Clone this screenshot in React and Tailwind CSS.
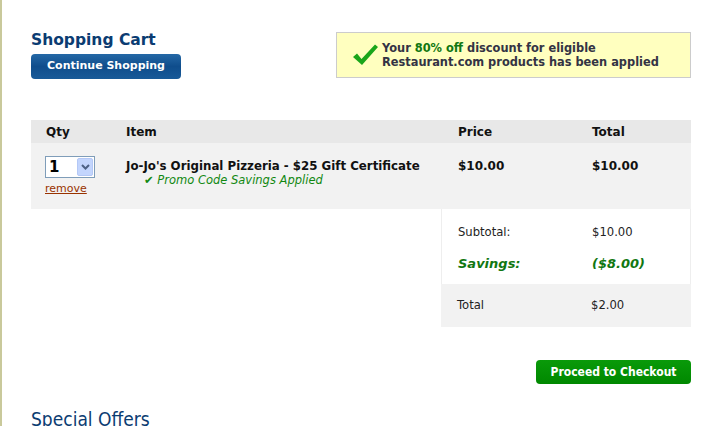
export default function App() {
  const v = { fontFamily: '"DejaVu Sans", Verdana, sans-serif' };
  const c = { fontFamily: '"DejaVu Sans Condensed", "DejaVu Sans", sans-serif' };
  return (
    <div className="w-[711px] h-[426px] overflow-hidden bg-white border-l-2 border-[#c9c99b] relative" style={v}>
      <div className="pl-[29px] pr-[20px] pt-[28px]">
        <div className="flex justify-between">
          <div>
            <h1 className="text-[15.5px] font-bold text-[#0b3c72] leading-[22px] pt-[1px]">Shopping Cart</h1>
            <button className="mt-[3px] w-[150px] h-[25px] rounded-[4px] text-white text-[11px] font-bold bg-gradient-to-b from-[#2468a6] via-[#0f4d8c] to-[#185a98]">
              Continue Shopping
            </button>
          </div>
          <div className="mt-[4px] w-[355px] h-[46px] bg-[#ffffbf] border border-[#cccccc] flex items-center pl-[14px]">
            <svg width="28" height="24" viewBox="0 0 28 24" className="mr-[3px]">
              <path d="M2 14 L6 10.5 L10.5 16 L24 1.5 L27 4 L11 22 Z" fill="#1aa61a" />
            </svg>
            <div className="text-[11.4px] font-bold text-[#333344] leading-[14px]">
              Your <span className="text-[#117711]">80% off</span> discount for eligible
              <br />
              Restaurant.com products has been applied
            </div>
          </div>
        </div>

        <div className="mt-[41px] w-[660px]">
          <div className="grid grid-cols-[80px_330px_135px_115px] h-[23px] items-center bg-[#e8e8e8] text-[12px] font-bold text-[#111]">
            <div className="pl-[15px]">Qty</div>
            <div className="pl-[15px]">Item</div>
            <div className="pl-[17px]">Price</div>
            <div className="pl-[16px]">Total</div>
          </div>
          <div className="grid grid-cols-[80px_330px_135px_115px] h-[66px] bg-[#f2f2f2] text-[12px] font-bold text-[#111]">
            <div className="pl-[14px] pt-[13px]">
              <div className="w-[50px] h-[22px] border border-[#7f9db9] bg-white flex items-center justify-between pl-[3px] pr-[1px]">
                <span className="text-[15px] font-bold text-black">1</span>
                <div className="w-[16px] h-[18px] bg-[#c3d5fd] border border-[#b4c8f6] rounded-[2px] flex items-center justify-center">
                  <svg width="9" height="6" viewBox="0 0 9 6"><path d="M1 1 L4.5 4.5 L8 1" stroke="#4d6185" strokeWidth="2" fill="none" /></svg>
                </div>
              </div>
              <div className="mt-[4px] text-[11px] font-normal text-[#993300] underline leading-[14px]">remove</div>
            </div>
            <div className="pl-[15px] pt-[16px]">
              <div className="leading-[14px] text-[11.8px]">Jo-Jo's Original Pizzeria - $25 Gift Certificate</div>
              <div className="pl-[18px] leading-[14px] text-[11.5px] italic font-normal text-[#118811]">✔ Promo Code Savings Applied</div>
            </div>
            <div className="pl-[17px] pt-[16px] leading-[14px]">$10.00</div>
            <div className="pl-[16px] pt-[16px] leading-[14px]">$10.00</div>
          </div>
          <div className="flex justify-end">
            <div className="w-[250px] border-x border-[#eeeeee] text-[11.6px] text-[#222]">
              <div className="grid grid-cols-[135px_115px] pt-[15px] h-[42px]">
                <div className="pl-[16px]">Subtotal:</div>
                <div className="pl-[15px]">$10.00</div>
              </div>
              <div className="grid grid-cols-[135px_115px] h-[33px] text-[13px] font-bold italic text-[#117711] leading-[14px] pt-[6px]">
                <div className="pl-[16px]">Savings:</div>
                <div className="pl-[15px]">($8.00)</div>
              </div>
            </div>
          </div>
          <div className="flex justify-end">
            <div className="w-[250px] h-[43px] bg-[#f2f2f2] grid grid-cols-[135px_115px] items-center text-[11.6px] text-[#222]">
              <div className="pl-[16px]">Total</div>
              <div className="pl-[15px]">$2.00</div>
            </div>
          </div>
          <div className="flex justify-end mt-[33px]">
            <button className="w-[155px] h-[24px] rounded-[4px] bg-gradient-to-b from-[#0a9a0a] to-[#008800] text-white text-[12px] font-bold" style={c}>
              Proceed to Checkout
            </button>
          </div>
        </div>
        <div className="mt-[24px] text-[19px] text-[#0b3c72] leading-[22px]" style={c}>Special Offers</div>
      </div>
    </div>
  );
}
